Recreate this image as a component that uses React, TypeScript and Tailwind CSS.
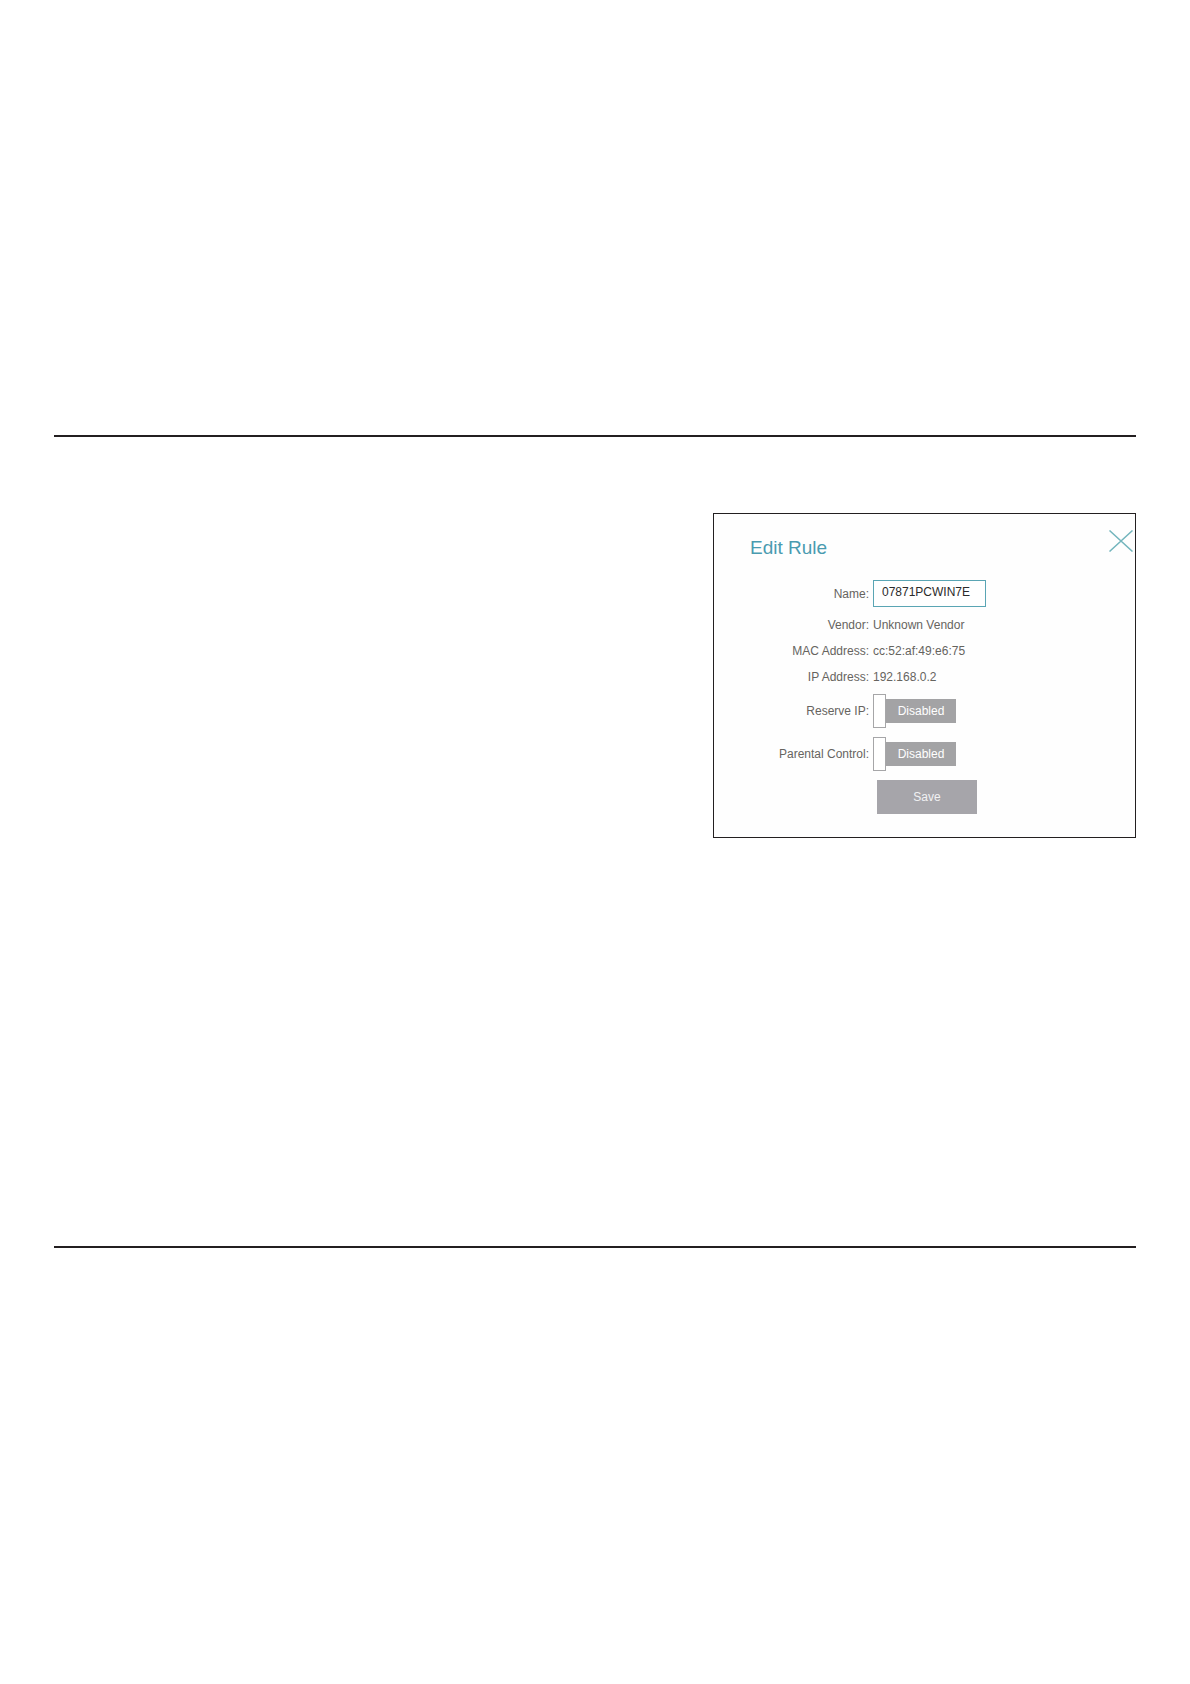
import { useState } from 'react'
import type { FormEvent, ReactNode } from 'react'

interface Rule {
  name: string
  vendor: string
  mac: string
  ip: string
  reserveIp: boolean
  parentalControl: boolean
}

const initialRule: Rule = {
  name: '07871PCWIN7E',
  vendor: 'Unknown Vendor',
  mac: 'cc:52:af:49:e6:75',
  ip: '192.168.0.2',
  reserveIp: false,
  parentalControl: false,
}

function Row({ label, htmlFor, children }: { label: string; htmlFor?: string; children: ReactNode }) {
  return (
    <div className="grid grid-cols-[155px_1fr] items-center gap-1">
      {htmlFor ? (
        <label htmlFor={htmlFor} className="text-right">{label}</label>
      ) : (
        <span className="text-right">{label}</span>
      )}
      {children}
    </div>
  )
}

function Toggle({ id, checked, onChange }: { id: string; checked: boolean; onChange: (value: boolean) => void }) {
  return (
    <label className={`relative flex w-fit cursor-pointer items-center ${checked ? 'flex-row-reverse' : ''}`}>
      <input
        id={id}
        type="checkbox"
        role="switch"
        checked={checked}
        onChange={e => onChange(e.target.checked)}
        className="sr-only"
      />
      <span className="h-[34px] w-[13px] border border-[#a6a6a8] bg-white" />
      <span
        className={`flex h-6 w-[70px] items-center justify-center text-white ${checked ? 'bg-[#4a9fb0]' : 'bg-[#a3a3a5]'}`}
      >
        {checked ? 'Enabled' : 'Disabled'}
      </span>
    </label>
  )
}

function EditRule() {
  const [rule, setRule] = useState<Rule>(initialRule)
  const [isOpen, setIsOpen] = useState(true)

  const handleSubmit = (e: FormEvent) => {
    e.preventDefault()
    setIsOpen(false)
  }

  if (!isOpen) return null

  return (
    <form
      onSubmit={handleSubmit}
      className="w-full max-w-[423px] self-start border border-[#231f20] bg-[#fefefe] pb-[23px] text-xs text-[#66645f]"
    >
      <div className="flex h-[46px] justify-between pt-4 pr-[2px] pl-9">
        <h2 className="self-end text-[19px] leading-6 text-[#4a9bb0]">Edit Rule</h2>
        <button type="button" aria-label="Close" onClick={() => setIsOpen(false)} className="self-start">
          <svg width="24" height="22" viewBox="0 0 24 22" fill="none" stroke="#73b5bd" strokeWidth="1.5" className="block">
            <path d="M0.5 0.5L23.5 21.5M23.5 0.5L0.5 21.5" />
          </svg>
        </button>
      </div>

      <div className="mt-5">
        <Row label="Name:" htmlFor="name">
          <input
            id="name"
            type="text"
            value={rule.name}
            onChange={e => setRule({ ...rule, name: e.target.value })}
            className="h-[27px] w-[113px] border border-[#5aa5b4] bg-white px-2 pb-[3px] text-[#2b2b2b] outline-none"
          />
        </Row>

        <div className="mt-[5px] leading-[26px]">
          <Row label="Vendor:"><span>{rule.vendor}</span></Row>
          <Row label="MAC Address:"><span>{rule.mac}</span></Row>
          <Row label="IP Address:"><span>{rule.ip}</span></Row>
        </div>

        <div className="mt-1 flex flex-col gap-[9px]">
          <Row label="Reserve IP:" htmlFor="reserve-ip">
            <Toggle
              id="reserve-ip"
              checked={rule.reserveIp}
              onChange={value => setRule({ ...rule, reserveIp: value })}
            />
          </Row>
          <Row label="Parental Control:" htmlFor="parental-control">
            <Toggle
              id="parental-control"
              checked={rule.parentalControl}
              onChange={value => setRule({ ...rule, parentalControl: value })}
            />
          </Row>
          <div className="pl-[163px]">
            <button type="submit" className="block h-[34px] w-[100px] bg-[#a6a5aa] text-[#f1f1f3]">
              Save
            </button>
          </div>
        </div>
      </div>
    </form>
  )
}

export default function App() {
  return (
    <div className="min-h-screen bg-white px-[54px] pt-[435px] font-['Liberation_Sans',Arial,sans-serif]">
      <main className="flex min-h-[813px] justify-end border-y-2 border-[#231f20] pt-[76px]">
        <EditRule />
      </main>
    </div>
  )
}
